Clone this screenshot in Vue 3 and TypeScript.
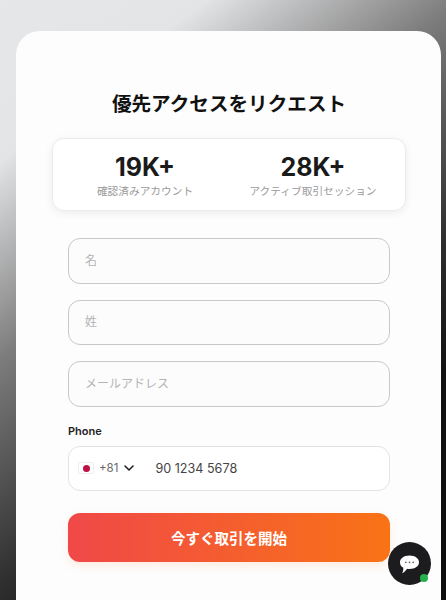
<script setup lang="ts">
const stats = [
  { value: '19K+', label: '確認済みアカウント' },
  { value: '28K+', label: 'アクティブ取引セッション' },
]
const fields = ['名', '姓', 'メールアドレス']
</script>

<template>
  <div class="page">
    <main class="card">
      <h1 class="title">優先アクセスをリクエスト</h1>
      <section class="stats">
        <div v-for="s in stats" :key="s.value" class="stat">
          <div class="stat-value">{{ s.value }}</div>
          <div class="stat-label">{{ s.label }}</div>
        </div>
      </section>
      <form class="form" @submit.prevent>
        <input v-for="f in fields" :key="f" class="field" type="text" :placeholder="f" />
        <div class="phone-group">
          <label class="phone-label">Phone</label>
          <div class="phone">
            <span class="flag"><span class="dot"></span></span>
            <span class="code">+81</span>
            <svg class="chev" width="10" height="6" viewBox="0 0 10 6" fill="none">
              <path d="M1 1l4 4 4-4" stroke="#1a1a1a" stroke-width="1.5" stroke-linecap="round" stroke-linejoin="round" />
            </svg>
            <span class="number">90 1234 5678</span>
          </div>
        </div>
        <button class="cta" type="submit">今すぐ取引を開始</button>
      </form>
    </main>
    <button class="chat" type="button" aria-label="chat">
      <svg width="21" height="19" viewBox="0 0 21 19">
        <path d="M10.5 0.5C16 0.5 20 3.3 20 7.3S16 14 10.5 14c-.9 0-1.7-.1-2.5-.2C7 15.5 5.3 17.4 3 18.3c.9-1.3 1.4-3 1.3-5.5C2 11.6 1 9.6 1 7.3 1 3.3 5 .5 10.5.5Z" fill="#fff" />
        <circle cx="6.8" cy="7.3" r=".9" fill="#666" />
        <circle cx="10.5" cy="7.3" r=".9" fill="#666" />
        <circle cx="14.2" cy="7.3" r=".9" fill="#666" />
      </svg>
      <span class="online"></span>
    </button>
  </div>
</template>

<style scoped>
.page {
  position: relative;
  box-sizing: border-box;
  width: 446px;
  height: 600px;
  overflow: hidden;
  padding: 31px 5px 0 16px;
  background: linear-gradient(142deg, #e6e7e9 0%, #e3e4e6 17%, #7c7c7c 38%, #2e2e2e 62%, #111 76%, #0d0d0d 100%);
  font-family: Inter, "Noto Sans CJK JP", sans-serif;
}
.card {
  box-sizing: border-box;
  height: 620px;
  border-radius: 24px 24px 0 0;
  background: #fdfdfd;
  padding: 60px 36px 0 37px;
}
.title {
  margin: 0;
  text-align: center;
  font-size: 19.6px;
  line-height: 26px;
  font-weight: 700;
  color: #111;
}
.stats {
  box-sizing: border-box;
  height: 73px;
  margin: 21px -1px 0 -1px;
  display: grid;
  grid-template-columns: 1fr 1fr;
  align-items: center;
  padding: 3px 8px 0;
  background: #fff;
  border: 1px solid #ececec;
  border-radius: 12px;
  box-shadow: 0 2px 8px rgba(0, 0, 0, 0.07);
  text-align: center;
}
.stat-value {
  font-size: 25px;
  line-height: 30px;
  font-weight: 700;
  color: #1a1a1a;
}
.stat-label {
  margin-top: 2px;
  font-size: 10.7px;
  line-height: 16px;
  color: #9a9a9a;
}
.form {
  display: flex;
  flex-direction: column;
  gap: 16px;
  margin: 27px 15px 0 15px;
}
.field {
  box-sizing: border-box;
  height: 45.5px;
  padding: 0 0 1px 16px;
  border: 1px solid #c8c8c8;
  border-radius: 12px;
  background: #fcfcfc;
  font-family: inherit;
  font-size: 12px;
  outline: none;
}
.field::placeholder {
  color: #b4b4b4;
  opacity: 1;
}
.phone-label {
  display: block;
  font-size: 11px;
  line-height: 16px;
  font-weight: 600;
  color: #222;
}
.phone {
  box-sizing: border-box;
  height: 45px;
  margin-top: 7px;
  display: flex;
  align-items: center;
  padding-left: 9px;
  border: 1px solid #e3e3e3;
  border-radius: 12px;
  background: #fff;
}
.flag {
  box-sizing: border-box;
  width: 16px;
  height: 12px;
  display: flex;
  align-items: center;
  justify-content: center;
  background: #fff;
  border: 1px solid #eee;
  border-radius: 2px;
}
.dot {
  width: 7px;
  height: 7px;
  border-radius: 50%;
  background: #bc1142;
}
.code {
  margin-left: 5px;
  font-size: 11.5px;
  color: #666;
}
.chev {
  margin-left: 6px;
}
.number {
  margin-left: 21px;
  font-size: 12.6px;
  color: #444;
}
.cta {
  height: 49px;
  margin-top: 6px;
  border: 0;
  border-radius: 12px;
  background: linear-gradient(90deg, #f04848 0%, #f97316 100%);
  box-shadow: 0 4px 10px rgba(249, 115, 22, 0.12);
  color: #fff;
  font-family: inherit;
  font-size: 14.5px;
  font-weight: 600;
}
.chat {
  position: absolute;
  left: 388px;
  top: 542px;
  width: 43px;
  height: 43px;
  display: flex;
  align-items: center;
  justify-content: center;
  padding: 2px 0 0;
  border: 0;
  border-radius: 50%;
  background: #1c1c1e;
}
.online {
  position: absolute;
  left: 32px;
  top: 32px;
  width: 8px;
  height: 8px;
  border-radius: 50%;
  background: #22b14c;
}
</style>
